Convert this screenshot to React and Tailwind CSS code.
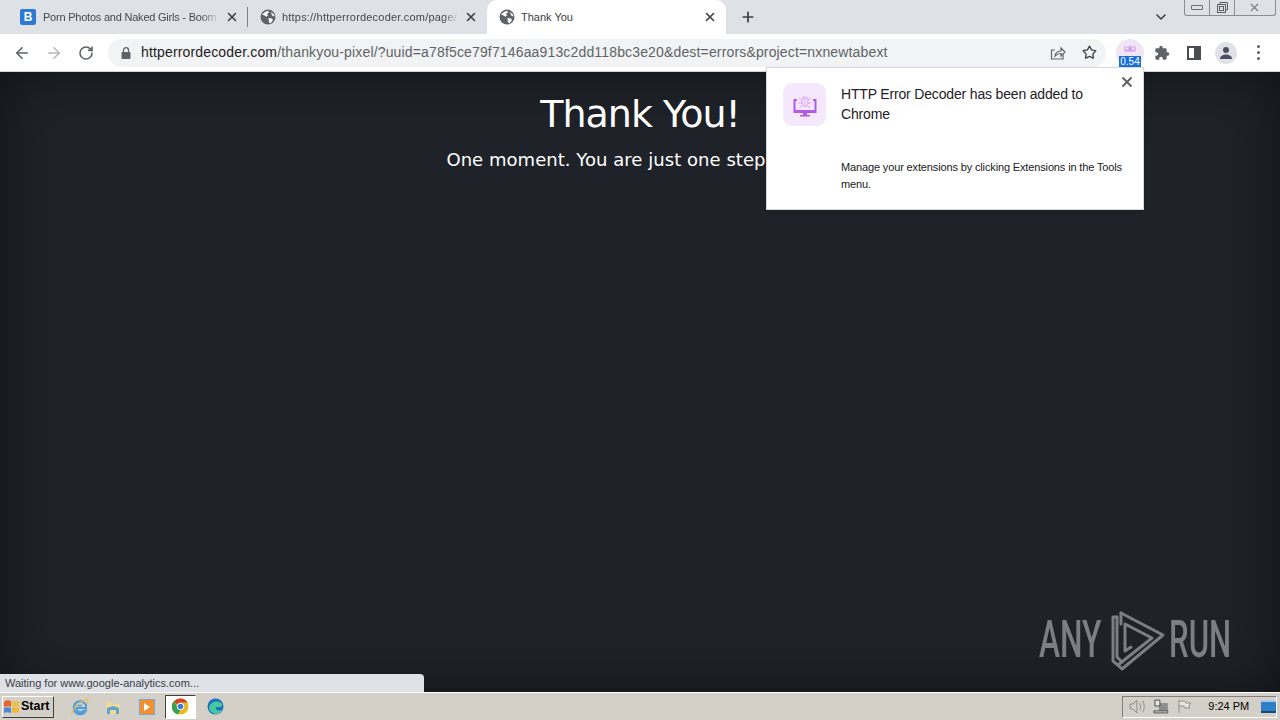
import React from "react";
import { ArrowLeft, ArrowRight, RotateCw, Star, X, Plus, ChevronDown } from "lucide-react";

const Globe = () => (
  <svg width="16" height="16" viewBox="0 0 16 16" className="shrink-0">
    <circle cx="8" cy="8" r="7.5" fill="#5f6368" />
    <path d="M2 5.5 5 3l3-1.2 1 1.6-2 1.6 1 1.6-1.6 1.2L4.500 6.500zM8.500 9l3.500.5 1 1.800-2.500 3L9 13.500zM11 3l3 2.500.6 2-2.600-1z" fill="#fff" />
  </svg>
);

const Tab = ({ icon, title, active, className, textClass }) => (
  <div className={`flex items-center h-[34px] w-[239px] shrink-0 pl-3 gap-[6px] ${active ? "bg-white rounded-t-[10px] text-[#3c4043]" : "text-[#45494d]"} ${className}`}>
    {icon}
    <span className={`flex-1 min-w-0 overflow-hidden whitespace-nowrap text-[11px] leading-none ${textClass}`}>{title}</span>
    <X size={14} strokeWidth={2.8} className="shrink-0 text-[#3f4347]" />
  </div>
);

const WinControls = () => (
  <div className="absolute right-[4px] top-0 h-[16px] w-[92px] flex border border-t-0 border-[#8a8e93] rounded-b-[3px] text-[#5b5f63] bg-[#dee1e6]">
    <div className="w-[25px] flex items-center justify-center border-r border-[#8a8e93]">
      <div className="w-[12px] h-[5px] border border-[#6a6e72] rounded-[1px]" />
    </div>
    <div className="w-[25px] flex items-center justify-center border-r border-[#8a8e93]">
      <svg width="13" height="13" viewBox="0 0 13 13" fill="none" stroke="#5b5f63"><rect x="1.5" y="3.5" width="8" height="8" /><path d="M4 3V1.500h7.500V9H10" /><rect x="3.500" y="5.500" width="4" height="4" /></svg>
    </div>
    <div className="flex-1 flex items-center justify-center pr-[2px]">
      <X size={13} strokeWidth={2} className="text-[#777b7f]" />
    </div>
  </div>
);

const Tabs = () => (
  <div className="relative h-[34px] shrink-0 bg-[#dee1e6] flex items-center pl-[8px]">
    <Tab
      className="pr-[8px]"
      textClass="pl-[1px] tracking-[-0.22px] [mask-image:linear-gradient(to_right,black_90%,transparent)]"
      title="Porn Photos and Naked Girls - Boom"
      icon={<div className="w-[16px] h-[16px] shrink-0 rounded-[2px] bg-[#2b7bd6] text-white text-[12px] font-bold flex items-center justify-center">B</div>}
    />
    <div className="w-px h-[20px] bg-[#7d8085] shrink-0" />
    <Tab className="pr-[9px]" textClass="tracking-[0.2px] [mask-image:linear-gradient(to_right,black_92%,transparent)]" title="https://httperrordecoder.com/page/" icon={<Globe />} />
    <Tab className="pr-[9px]" title="Thank You" active icon={<Globe />} />
    <Plus size={16} strokeWidth={2.6} className="ml-[14px] text-[#3c4043]" />
    <div className="flex-1" />
    <ChevronDown size={16} strokeWidth={2.4} className="mr-[111px] text-[#3c4043]" />
    <WinControls />
  </div>
);

const Toolbar = () => (
  <div className="h-[38px] shrink-0 bg-white border-b border-[#d0d3d8] flex items-center pl-[13px] pr-[13px]">
    <ArrowLeft size={18} strokeWidth={2.2} className="text-[#5f6368]" />
    <ArrowRight size={18} strokeWidth={2} className="ml-[14px] text-[#b4b7bb]" />
    <RotateCw size={16} strokeWidth={2.4} className="ml-[15px] text-[#5f6368]" />
    <div className="ml-[14px] h-[28px] w-[998px] rounded-full bg-[#f1f3f4] flex items-center pl-[13px] pr-[9px]">
      <svg width="10" height="12" viewBox="0 0 10 12" className="shrink-0"><rect x="0.5" y="5" width="9" height="7" rx="1" fill="#5f6368" /><path d="M2.500 5V3.200a2.500 2.500 0 0 1 5 0V5" fill="none" stroke="#5f6368" strokeWidth="1.300" /></svg>
      <div className="ml-[10px] flex-1 text-[14px] tracking-[0.155px] whitespace-nowrap overflow-hidden">
        <span className="text-[#1f2023]">httperrordecoder.com</span>
        <span className="text-[#5f6368]">/thankyou-pixel/?uuid=a78f5ce79f7146aa913c2dd118bc3e20&amp;dest=errors&amp;project=nxnewtabext</span>
      </div>
      <svg width="16" height="16" viewBox="0 0 16 16" fill="none" stroke="#5f6368" strokeWidth="1.200" className="shrink-0 mr-[16px]"><path d="M13 9.500V14H1.500V5H5" /><path d="M5 11c.5-3 3-5 6-5V3l4 4-4 4V8.500c-2.500 0-4.500 1-6 2.500z" /></svg>
      <Star size={15} strokeWidth={2.2} className="shrink-0 text-[#44474a]" />
    </div>
    <div className="relative ml-[10px] w-[28px] h-[28px] rounded-full bg-[#efe5f3] flex items-center justify-center shrink-0">
      <svg width="12" height="10" viewBox="0 0 12 10" className="-mt-[6px]"><path d="M1 1v5h10V1M6 0v6M3 2l6 3M9 2 3 5" fill="none" stroke="#c98cf0" strokeWidth="1" /></svg>
      <div className="absolute left-[3px] top-[17px] w-[22px] h-[11px] bg-[#1a6fdc] text-white text-[10px] leading-[11px] text-center">0.54</div>
    </div>
    <svg width="16" height="16" viewBox="0 0 24 24" fill="#5f6368" className="ml-[10px] shrink-0"><path d="M20.500 11H19V7a2 2 0 0 0-2-2h-4V3.500a2.500 2.500 0 0 0-5 0V5H4a2 2 0 0 0-2 2v3.800h1.500a2.700 2.700 0 0 1 0 5.400H2V20a2 2 0 0 0 2 2h3.800v-1.500a2.700 2.700 0 0 1 5.400 0V22H17a2 2 0 0 0 2-2v-4h1.500a2.500 2.500 0 0 0 0-5z" /></svg>
    <div className="ml-[17px] w-[14px] h-[14px] border-[2px] border-[#4a4e52] flex justify-end shrink-0"><div className="w-[5px] h-full bg-[#4a4e52]" /></div>
    <div className="ml-[14px] w-[22px] h-[22px] rounded-full bg-[#dfe1e6] flex items-center justify-center shrink-0">
      <svg width="14" height="14" viewBox="0 0 14 14" fill="#4a4f63"><circle cx="7" cy="4" r="3" /><path d="M1 13c0-3 3-4.500 6-4.500s6 1.500 6 4.500z" /></svg>
    </div>
    <div className="ml-[20px] flex flex-col gap-[3px] shrink-0">
      <div className="w-[3px] h-[3px] rounded-full bg-[#5f6368]" />
      <div className="w-[3px] h-[3px] rounded-full bg-[#5f6368]" />
      <div className="w-[3px] h-[3px] rounded-full bg-[#5f6368]" />
    </div>
  </div>
);

const BugMonitor = () => (
  <svg width="26" height="26" viewBox="0 0 26 26" fill="none">
    <path d="M5 8H2.500v12h21V8H21" stroke="#b05ce8" strokeWidth="2" />
    <path d="M2 18h22v3H2zM11 21h4v2h3v1.500H8V23h3z" fill="#b05ce8" />
    <ellipse cx="13" cy="10" rx="3" ry="4.500" stroke="#d8a8f4" strokeWidth="1.200" />
    <path d="M13 5v10M10 8 7 6M16 8l3-2M10 11H6.500M16 11h3.500M10 14l-2.500 2M16 14l2.500 2M11 4l1 2M15 4l-1 2" stroke="#d8a8f4" strokeWidth="1" />
  </svg>
);

const Popup = () => (
  <div className="absolute left-[766px] top-[67px] w-[378px] h-[143px] bg-white border border-[#d5d8dd] shadow-sm flex pl-[16px] pt-[15px] font-['Liberation_Sans',sans-serif] z-10">
    <div className="w-[43px] h-[43px] rounded-[9px] bg-[#f5e8fd] flex items-center justify-center shrink-0">
      <BugMonitor />
    </div>
    <div className="ml-[15px] w-[285px]">
      <div className="text-[14px] leading-[20px] tracking-[-0.17px] text-[#1f2023] pt-px w-[255px]">HTTP Error Decoder has been added to Chrome</div>
      <div className="mt-[35px] text-[11px] leading-[17px] tracking-[-0.14px] text-[#202124]">Manage your extensions by clicking Extensions in the Tools menu.</div>
    </div>
    <X size={16} strokeWidth={2.8} className="absolute right-[8px] top-[6px] text-[#5f6368]" />
  </div>
);

const Watermark = () => (
  <div className="absolute left-[1039px] top-[533px] flex items-center text-[#7b7f83] font-['Roboto',sans-serif] font-medium leading-none">
    <span className="w-[66px] text-[52px] origin-left scale-x-[0.61] whitespace-nowrap">ANY</span>
    <svg width="65" height="70" viewBox="0 0 65 70" fill="none" stroke="#7b7f83" strokeWidth="3" strokeLinejoin="round" strokeLinecap="round" className="shrink-0">
      <path d="M12 12H8v44l6 5" />
      <path d="M12 12v40l5 5" />
      <path d="M16 8 58 30 17 64l-4-4 34-27-27-14v27l6-4" />
      <path d="M16 8v11" />
    </svg>
    <span className="w-[62px] text-[52px] origin-left scale-x-[0.6] whitespace-nowrap -ml-[1px]">RUN</span>
  </div>
);

const Page = () => (
  <div className="relative flex-1 overflow-hidden bg-[#1f2329] shadow-[inset_0_0_60px_rgba(0,0,0,0.5)] flex flex-col items-center font-['DejaVu_Sans',sans-serif] text-white">
    <h1 className="mt-[18px] text-[38px] leading-[48px] tracking-[-1px] whitespace-nowrap">Thank You!</h1>
    <p className="mt-[8px] text-[18px] leading-[28px] tracking-[0.04px] whitespace-nowrap">One moment. You are just one step away...</p>
    <Watermark />
    <div className="absolute left-0 bottom-0 w-[424px] h-[18px] bg-[#dee1e6] rounded-tr-[4px] text-[11px] leading-[18px] pl-[5px] text-[#3c4043] font-['Liberation_Sans',sans-serif]">Waiting for www.google-analytics.com...</div>
  </div>
);

const Taskbar = () => (
  <div className="h-[28px] shrink-0 bg-[#d4d0c8] border-t border-white flex items-center pl-[2px] pr-[3px] font-['Liberation_Sans',sans-serif]">
    <div className="w-[52px] h-[22px] border border-t-white border-l-white border-r-[#404040] border-b-[#404040] flex items-center pl-[0px] gap-px bg-[#d4d0c8]">
      <svg width="17" height="15" viewBox="0 0 17 15"><path d="M1 3c2-2 4-2 7-1v6C5 7 3 7 1 8z" fill="#e8642c" /><path d="M9 2c2 1 5 1 7 0v5c-2 1-5 1-7 0z" fill="#e8c040" /><path d="M1 9c2-1 4-1 7 0v5c-3-1-5-1-7 0z" fill="#4c88d8" /><path d="M9 8c2 1 5 1 7 0v5c-2 1-5 1-7 0z" fill="#f0b830" /></svg>
      <span className="text-[12.5px] font-bold text-black leading-none">Start</span>
    </div>
    <svg width="18" height="18" viewBox="0 0 18 18" fill="none" className="ml-[17px]"><path d="M15 10H5a4.500 4.500 0 0 0 8 2.500h2A6.500 6.500 0 1 1 15 7z" stroke="#4a9ee0" strokeWidth="2" /><path d="M5 7.500h6" stroke="#4a9ee0" strokeWidth="1.500" /><path d="M1 16C0 13 9 3 16 1c1 1 1 3 0 5" stroke="#e8c050" strokeWidth="1.200" /></svg>
    <svg width="16" height="16" viewBox="0 0 16 16" className="ml-[16px]"><path d="M1 3h6l1 2h7v10H1z" fill="#ecd9a0" /><path d="M2 15V9l6-2 6 2v6h-3v-4H5v4z" fill="#5aa6cc" /></svg>
    <div className="ml-[18px] w-[16px] h-[16px] bg-[#f09030] border border-[#7aa8d8] flex items-center justify-center"><div className="w-0 h-0 border-y-[4px] border-y-transparent border-l-[6px] border-l-white" /></div>
    <div className="ml-[10px] w-[31px] h-[24px] bg-white border border-t-[#404040] border-l-[#404040] border-r-white border-b-white flex items-center justify-center">
      <svg width="17" height="17" viewBox="0 0 17 17"><circle cx="8.500" cy="8.500" r="8" fill="#e8b820" /><path d="M8.500.5a8 8 0 0 1 7 4h-7a4 4 0 0 0-3.500 2L2 3A8 8 0 0 1 8.500.5z" fill="#d8402c" /><path d="M2 3l3.200 5.500a4 4 0 0 0 3.500 3L6 16.500A8 8 0 0 1 2 3z" fill="#3ca050" /><circle cx="8.500" cy="8.500" r="3.300" fill="#3a7ae0" stroke="#fff" strokeWidth="1" /></svg>
    </div>
    <svg width="17" height="17" viewBox="0 0 17 17" className="ml-[11px]"><circle cx="8.500" cy="8.500" r="8" fill="#1a6fc0" /><path d="M2 10C3 4 10 2 14 5c2 2 1 4-2 4-3 0-4 0-3 2 1 2 5 2 7 0-2 5-7 6-10 4-2-1-4-3-4-5z" fill="#48c8a0" /></svg>
    <div className="flex-1" />
    <div className="w-[155px] h-[22px] border border-t-[#808080] border-l-[#808080] border-r-white border-b-white flex items-center">
      <svg width="18" height="15" viewBox="0 0 18 15" fill="none" stroke="#8c8c8c" strokeWidth="1" className="ml-[6px]"><path d="M1 5h3l4-4v13l-4-4H1zM11 4c1 2 1 5 0 7M14 2c2 3 2 8 0 11" /></svg>
      <svg width="16" height="16" viewBox="0 0 16 16" className="ml-[6px]"><rect x="6" y="4" width="9" height="9" fill="#8c8c8c" /><path d="M2 1h5v6H2zM1 12h14v2H1z" fill="#e8e6e0" stroke="#4c4c4c" /></svg>
      <svg width="16" height="15" viewBox="0 0 16 15" fill="#e8e6e0" stroke="#8c8c8c" className="ml-[8px]"><path d="M2 1v13M2 2h6l1 2h5l-2 3 1 2H8L7 7H2" /></svg>
      <span className="ml-[16px] text-[11px] text-black whitespace-nowrap">9:24 PM</span>
      <div className="ml-[12px] w-[15px] h-[13px] bg-[#2e7ec8] border-t-[2px] border-[#a8c8e8] flex items-end"><div className="w-full h-[2px] bg-[#184a80]" /></div>
    </div>
  </div>
);

export default function App() {
  return (
    <div className="relative w-[1280px] h-[720px] overflow-hidden flex flex-col bg-white font-['Liberation_Sans',sans-serif]">
      <Tabs />
      <Toolbar />
      <Page />
      <Taskbar />
      <Popup />
    </div>
  );
}
